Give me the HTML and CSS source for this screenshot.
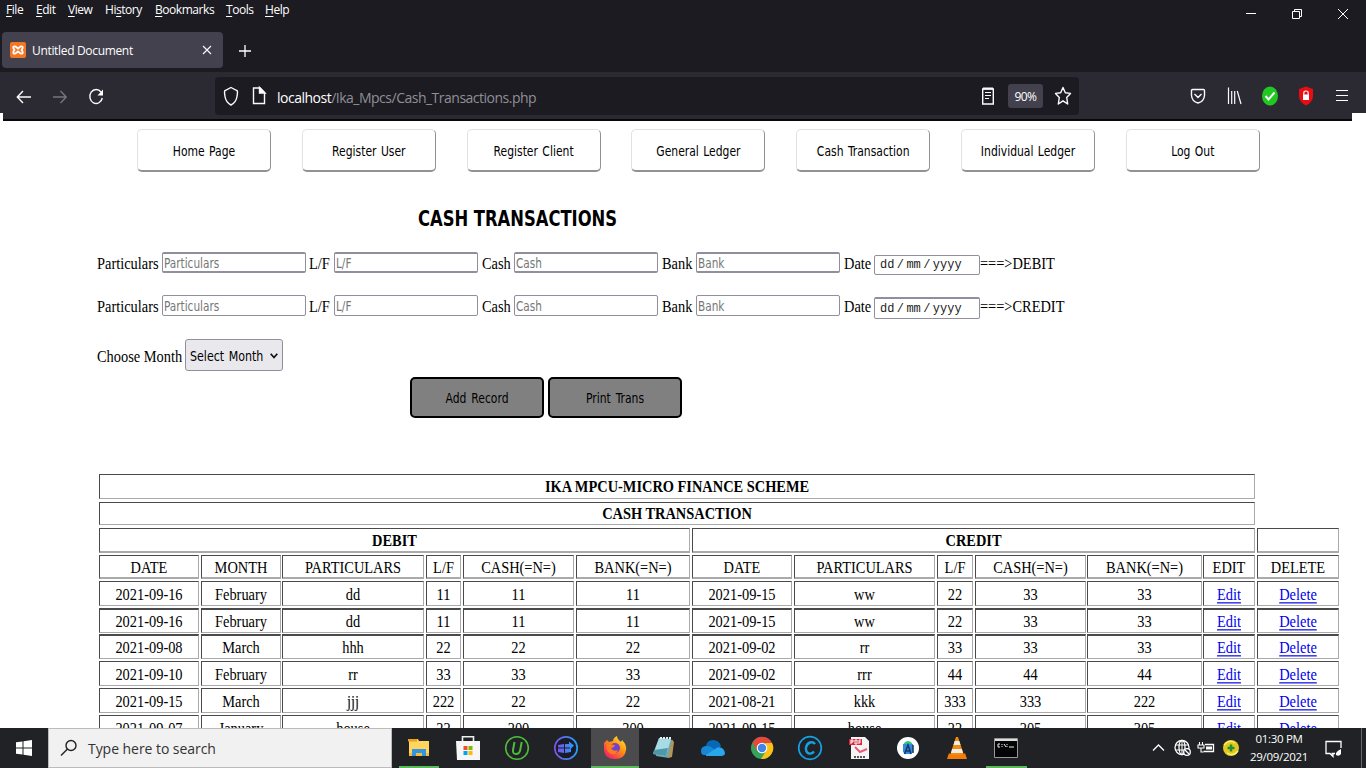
FILE: index.html
```html
<!DOCTYPE html>
<html lang="en">
<head>
<meta charset="utf-8">
<title>Untitled Document</title>
<link rel="stylesheet" href="styles.css">
</head>
<body>
<header class="chrome">
  <div class="titlebar">
    <nav class="menus"><span><u>F</u>ile</span><span><u>E</u>dit</span><span><u>V</u>iew</span><span>Hi<u>s</u>tory</span><span><u>B</u>ookmarks</span><span><u>T</u>ools</span><span><u>H</u>elp</span></nav>
    <svg class="winctl" width="110" height="28" fill="none" stroke="#fff" stroke-width="1"><path d="M6 13.500h10M52.500 11.500h7v7h-7zM54.500 11.500v-2h7v7h-2M98 9l10 10M108 9l-10 10"/></svg>
  </div>
  <div class="tabs">
    <div class="tab">
      <svg width="16" height="16"><rect width="16" height="16" rx="2" fill="#f37623"/><path d="M5.500 4.500L8 6.500l2.500-2q3-.5 2 2L11.500 8l1 1.500q1 2.500-2 2L8 9.500l-2.500 2q-3 .5-2-2L4.500 8l-1-1.500q-1-2.500 2-2z" fill="none" stroke="#fff" stroke-width="1.800"/></svg>
      <span class="tabname">Untitled Document</span>
      <svg width="10" height="10" stroke="#fbfbfe" stroke-width="1.100"><path d="M1 1l8 8M9 1l-8 8"/></svg>
    </div>
    <svg class="plus" width="12" height="12" stroke="#fff" stroke-width="1.300"><path d="M0 6h12M6 0v12"/></svg>
  </div>
  <div class="toolbar">
    <svg class="navicons" width="92" height="20" fill="none" stroke="#fbfbfe" stroke-width="1.400"><path d="M15 10H1.500M7 4L1.300 10 7 16"/><path d="M37 10h13.500M44.500 4l5.700 6-5.700 6" stroke="#77767f"/><path d="M85 5A6.300 7 0 1 0 86.300 11"/><path d="M87 2.500v6h-5.500z" fill="#fff" stroke="none"/></svg>
    <div class="urlbar">
      <svg width="46" height="22" fill="none" stroke="#fbfbfe" stroke-width="1.400"><path d="M9 2.500l5.800 3c1 0 .7 3 .2 6-.6 4-3 7-6 8.500-3-1.500-5.400-4.500-6-8.500-.5-3-.8-6 .2-6z"/><path d="M32 3h6l4.500 4.500v11H31.500V3z"/><path d="M37.500 2.500v5.500h5.500z" fill="#fff"/></svg>
      <span class="url"><b>localhost</b>/Ika_Mpcs/Cash_Transactions.php</span>
      <svg width="12" height="18" fill="none" stroke="#fbfbfe"><path d="M.700 2h10.600v15H.700z" stroke-width="1.400"/><path d="M1 1.500h10" stroke-width="2"/><path d="M3 5.500h6M3 8.500h6M3 11.500h4" stroke-width="1.200"/></svg>
      <span class="zoom"><span>90%</span></span>
      <svg width="18" height="20" fill="none" stroke="#fbfbfe" stroke-width="1.400" stroke-linejoin="round"><path d="M9 1.500l2.300 5.300 5.200.6-3.800 4.100 1 6.500L9 14.800 4.300 18l1-6.500L1.500 7.400l5.200-.6z"/></svg>
    </div>
    <svg class="exts" width="162" height="22" fill="none" stroke="#fbfbfe" stroke-width="1.400"><path d="M2.500 4.500h11q1 0 1 1v5q-.5 6-6.500 7.500-6-1.500-6.500-7.500v-5q0-1 1-1zM4.500 9L8 12.500l3.500-3.500"/><path d="M38.500 2.500v16.500M41.700 6v13M44.700 6v13M47.300 6l3.700 13" stroke-width="1.200"/><ellipse cx="80" cy="11" rx="8" ry="9.500" fill="#21c821" stroke="none"/><path d="M75.500 11l3 3.500 6-7" stroke-width="2"/><path d="M116 1.500l7 2.500v7q0 6-7 9.500-7-3.500-7-9.500V4z" fill="#e80d12" stroke="none"/><path d="M113.800 10V8q0-2 2.200-2T118.200 8v2" stroke-width="1.200"/><path d="M113 9.500h6v5.500h-6z" fill="#fff" stroke="none"/><path d="M146 5.500h12M146 10.500h12M146 15.500h12" stroke-width="1.200"/></svg>
  </div>
</header>

<main class="page">
  <nav class="links"><a><span>Home Page</span></a><a><span>Register User</span></a><a><span>Register Client</span></a><a><span>General Ledger</span></a><a><span>Cash Transaction</span></a><a><span>Individual Ledger</span></a><a><span>Log Out</span></a></nav>
  <h1><span>CASH TRANSACTIONS</span></h1>
  <div class="entry debit"><label>Particulars</label><div class="box"><span>Particulars</span></div><label>L/F</label><div class="box"><span>L/F</span></div><label>Cash</label><div class="box"><span>Cash</span></div><label>Bank</label><div class="box"><span>Bank</span></div><label>Date</label><div class="date"><span>dd</span><em>/</em><span>mm</span><em>/</em><span>yyyy</span></div><label>===&gt;DEBIT</label></div>
  <div class="entry credit"><label>Particulars</label><div class="box"><span>Particulars</span></div><label>L/F</label><div class="box"><span>L/F</span></div><label>Cash</label><div class="box"><span>Cash</span></div><label>Bank</label><div class="box"><span>Bank</span></div><label>Date</label><div class="date"><span>dd</span><em>/</em><span>mm</span><em>/</em><span>yyyy</span></div><label>===&gt;CREDIT</label></div>
  <div class="month"><label>Choose Month</label><div class="select"><span>Select Month</span><svg width="8" height="6" fill="none" stroke="#111" stroke-width="1.700"><path d="M.7.700L4 4.500 7.300.700"/></svg></div></div>
  <div class="actions"><div><span>Add Record</span></div><div><span>Print Trans</span></div></div>
  <div class="sheet">
    <div class="row r1"><div class="wide"><b>IKA MPCU-MICRO FINANCE SCHEME</b></div></div>
    <div class="row r2"><div class="wide"><b>CASH TRANSACTION</b></div></div>
    <div class="row r3"><div class="left"><b>DEBIT</b></div><div class="right"><b>CREDIT</b></div><div></div></div>
    <div class="row cells r4"><div><span>DATE</span></div><div><span>MONTH</span></div><div><span>PARTICULARS</span></div><div><span>L/F</span></div><div><span>CASH(=N=)</span></div><div><span>BANK(=N=)</span></div><div><span>DATE</span></div><div><span>PARTICULARS</span></div><div><span>L/F</span></div><div><span>CASH(=N=)</span></div><div><span>BANK(=N=)</span></div><div><span>EDIT</span></div><div><span>DELETE</span></div></div>
    <div class="row cells r5"><div><span>2021-09-16</span></div><div><span>February</span></div><div><span>dd</span></div><div><span>11</span></div><div><span>11</span></div><div><span>11</span></div><div><span>2021-09-15</span></div><div><span>ww</span></div><div><span>22</span></div><div><span>33</span></div><div><span>33</span></div><div><a>Edit</a></div><div><a>Delete</a></div></div>
    <div class="row cells r6"><div><span>2021-09-16</span></div><div><span>February</span></div><div><span>dd</span></div><div><span>11</span></div><div><span>11</span></div><div><span>11</span></div><div><span>2021-09-15</span></div><div><span>ww</span></div><div><span>22</span></div><div><span>33</span></div><div><span>33</span></div><div><a>Edit</a></div><div><a>Delete</a></div></div>
    <div class="row cells r7"><div><span>2021-09-08</span></div><div><span>March</span></div><div><span>hhh</span></div><div><span>22</span></div><div><span>22</span></div><div><span>22</span></div><div><span>2021-09-02</span></div><div><span>rr</span></div><div><span>33</span></div><div><span>33</span></div><div><span>33</span></div><div><a>Edit</a></div><div><a>Delete</a></div></div>
    <div class="row cells r8"><div><span>2021-09-10</span></div><div><span>February</span></div><div><span>rr</span></div><div><span>33</span></div><div><span>33</span></div><div><span>33</span></div><div><span>2021-09-02</span></div><div><span>rrr</span></div><div><span>44</span></div><div><span>44</span></div><div><span>44</span></div><div><a>Edit</a></div><div><a>Delete</a></div></div>
    <div class="row cells r9"><div><span>2021-09-15</span></div><div><span>March</span></div><div><span>jjj</span></div><div><span>222</span></div><div><span>22</span></div><div><span>22</span></div><div><span>2021-08-21</span></div><div><span>kkk</span></div><div><span>333</span></div><div><span>333</span></div><div><span>222</span></div><div><a>Edit</a></div><div><a>Delete</a></div></div>
    <div class="row cells r10"><div><span>2021-09-07</span></div><div><span>January</span></div><div><span>house</span></div><div><span>22</span></div><div><span>200</span></div><div><span>300</span></div><div><span>2021-09-15</span></div><div><span>house</span></div><div><span>22</span></div><div><span>205</span></div><div><span>305</span></div><div><a>Edit</a></div><div><a>Delete</a></div></div>
  </div>
</main>

<footer class="taskbar">
  <div class="start"><svg width="16" height="16" fill="#fff"><path d="M0 2.300L6.500 1.400V7.500H0zM7.500 1.200L16 0v7.500H7.500zM0 8.500h6.500v6.100L0 13.700zM7.500 8.500H16V16L7.500 14.800z"/></svg></div>
  <div class="search"><svg width="18" height="18" fill="none" stroke="#222" stroke-width="1.400"><circle cx="11" cy="6.500" r="5"/><path d="M7.500 10L1 16.500"/></svg><span>Type here to search</span></div>
  <div class="apps">
    <div class="open"><svg width="24" height="24"><path d="M2 3h9l1 2h10v15H2z" fill="#ffd45f"/><path d="M1 3h9v2.500H1z" fill="#e8a317"/><path d="M2 17h20v3H2z" fill="#f2bd43"/><path d="M5 20v-7h14v7h-4v-3H9v3z" fill="#3594dc"/></svg></div>
    <div><svg width="24" height="26"><path d="M6.500 8V1.700h11V8" fill="none" stroke="#eee" stroke-width="1.600"/><path d="M0 6h24v19H1z" fill="#f6f6f6"/><path d="M7.500 11h4v4h-4z" fill="#f25022"/><path d="M12.500 11h4v4h-4z" fill="#7fba00"/><path d="M7.500 16h4v4h-4z" fill="#00a4ef"/><path d="M12.500 16h4v4h-4z" fill="#ffb900"/></svg></div>
    <div><svg width="26" height="26" fill="none" stroke="#4dbb3b"><circle cx="13" cy="13" r="11.300" stroke-width="1.600"/><path d="M10.500 7l-1.500 8q-.4 4 3 4t4.200-4L17.700 7" stroke-width="2"/></svg></div>
    <div><svg width="26" height="26"><defs><linearGradient id="ring" x2="1"><stop stop-color="#7955e8"/><stop offset="1" stop-color="#269ff5"/></linearGradient></defs><circle cx="13" cy="13" r="11.200" fill="#191b29" stroke="url(#ring)" stroke-width="1.700"/><path d="M5 10l6-1v3.500H5zM12 9h4V6.500l5 4-4 4v-2h-5zM5 13.500h6V18l-6-1zM12 13.500h6V17l-6 1z" fill="url(#ring)"/></svg></div>
    <div class="open active"><svg width="26" height="26"><defs><linearGradient id="fire" x1="1" y1="0" x2=".2" y2="1"><stop stop-color="#fff44f"/><stop offset=".45" stop-color="#ff980e"/><stop offset="1" stop-color="#f5196b"/></linearGradient></defs><path d="M2 8L5 5l2 2 4-1q0-3 4-5 0 3 4 6l1-2q5 5 4 10-1 9-11 9Q2 24 2 14z" fill="url(#fire)"/><circle cx="13" cy="13" r="5" fill="#7043ca"/><path d="M5 9l8 1q-1 3-4 3 2 4 7 2-2 5-7 4-6-3-4-10z" fill="#ff7b22"/></svg></div>
    <div><svg width="24" height="24"><path d="M7 2l14 2-4 18-13-2z" fill="#6da8b4"/><path d="M7 2l12 1-5 17-13-2z" fill="#a8dce5"/><path d="M2 14l14-2-2 8-13-2z" fill="#4f98a8"/><path d="M20 4l2 2-2 15-4 1z" fill="#b99452"/><path d="M8 2h12" stroke="#eee" stroke-width="2" stroke-dasharray="2 1"/></svg></div>
    <div><svg width="26" height="18"><path d="M6 7Q7 1 13 1t8 6l-6 7H4z" fill="#0868b8"/><path d="M1 12q0-5 6-5 4 0 8 4l-4 5H4q-3 0-3-4z" fill="#1787d6"/><path d="M6 16l9-6q3-3 7-1 3 2 3 5 0 3-4 3H6z" fill="#28a8ea"/></svg></div>
    <div><svg width="24" height="24"><circle cx="12" cy="12" r="11" fill="#36a35a"/><path d="M2.500 6.500A11 11 0 0 1 22 7H12l-5 8z" fill="#e34a3c"/><path d="M22 7A11 11 0 0 1 11 23l5-8q2-4-1-8z" fill="#fbc116"/><circle cx="12" cy="12" r="5.300" fill="#fff"/><circle cx="12" cy="12" r="4.200" fill="#4285e8"/></svg></div>
    <div><svg width="26" height="26" fill="none" stroke="#13a0e5"><circle cx="13" cy="13" r="11.300" stroke-width="1.700"/><path d="M18 9q-2-2.500-5-1.500-3 1-4 5-.5 5 3 6 3 .5 5-2" stroke-width="2.400"/></svg></div>
    <div><svg width="22" height="24"><path d="M3 1h14l4 4v18H3z" fill="#f4f4f4"/><path d="M1 3h13v6H1z" fill="#dc263c"/><path d="M3 8V4h2v2H3M7 4v4h2V4zM11 8V4h2M11 6h2" stroke="#fff" fill="none"/><path d="M7 11l5 5 7-3" stroke="#ea5b78" stroke-width="2" fill="none"/><path d="M6 21h11" stroke="#555" stroke-width="2" stroke-dasharray="2 1"/></svg></div>
    <div><svg width="24" height="24"><circle cx="12" cy="12" r="11" fill="#fff"/><path d="M8 7q4-4 8 0v2H8z" fill="#33c87e"/><path d="M7 8h10v8l-2 2H9l-2-2z" fill="#3688df"/><path d="M8.500 18L12 9l3 9M10 15h4M17 9v8" stroke="#123a66" stroke-width="1.500" fill="none"/></svg></div>
    <div><svg width="22" height="24"><path d="M10 1h2l6 18H4z" fill="#f58a0b"/><path d="M8.700 5h4.600l1.200 4H7.500zM6.200 13h9.600l1.200 4H5z" fill="#eee"/><path d="M3 17l-2 6h20l-2-6-2 2H5z" fill="#f27c08"/></svg></div>
    <div class="open"><svg width="24" height="20"><path d="M.500.500h23v19H.500z" fill="#050505" stroke="#999"/><path d="M1 1h22v2H1z" fill="#ddd"/><path d="M6 6H4v3h2M8 6v1M8 8v1M10 6l2 3M13 6v1M13 8v1M15 9h5" stroke="#eee" fill="none"/></svg></div>
  </div>
  <div class="tray">
    <svg width="90" height="24" fill="none" stroke="#fff" stroke-width="1.300"><path d="M1 14.500l5.500-5.500 5.500 5.500"/><circle cx="30" cy="11.500" r="7"/><ellipse cx="30" cy="11.500" rx="3" ry="7"/><path d="M23 9h14M23 14h9M30 4v15" stroke-width="1"/><circle cx="35" cy="16" r="3.300" fill="#222225"/><path d="M33 14l4 4"/><path d="M47.500 6v3M50.500 6v3M46 9h6v3h-6zM49 12v4h2.500" stroke-width="1.100"/><path d="M53 8.500h8.500v7H51.500"/><path d="M54 10.500h6v3h-6z" fill="#fff" stroke="none"/><circle cx="79" cy="12" r="8" fill="#e1c923" stroke="none"/><path d="M72 9q5-6 11-2M86 15q-5 6-11 2" stroke="#fff173"/><path d="M79 8.500v7M75.500 12h7" stroke="#248b38" stroke-width="2.500"/></svg>
    <div class="clock"><span>01:30 PM</span><span>29/09/2021</span></div>
    <svg class="note" width="18" height="18" fill="none" stroke="#fff" stroke-width="1.300"><path d="M10 13.500H6.500M16 8V1.500H1v12h4l3 3v-3"/><path d="M16 9q-6 3-5 6 3 2 5-1z" fill="#fff" stroke="none"/></svg>
  </div>
</footer>
</body>
</html>
```
FILE: styles.css
```css
* { box-sizing: border-box; }
body { margin: 0; width: 1366px; height: 768px; overflow: hidden; display: flex; flex-direction: column; background: #fff; color: #000; }
svg { display: block; flex: none; }
span, b, label { white-space: nowrap; }

.chrome { height: 121px; flex: none; background: #1c1b22; color: #fff; font-family: "Open Sans", sans-serif; font-size: 12px; }
.titlebar { height: 32px; display: flex; justify-content: space-between; padding: 0 16px 0 6px; }
.menus { display: grid; grid-template-columns: 30px 32px 37px 50px 71px 39px 30px; height: 20px; line-height: 20px; letter-spacing: -.45px; }
.menus u { text-underline-offset: 2px; }
.tabs { height: 40px; display: flex; align-items: flex-start; padding-left: 2px; }
.tab { width: 221px; height: 36px; border-radius: 4px; background: #42414d; display: flex; align-items: center; padding: 0 11px 0 8px; gap: 6px; }
.tabname { flex: 1; letter-spacing: -.33px; }
.plus { margin: 13px 0 0 16px; }
.toolbar { height: 49px; background: #2b2a33; border-bottom: 2px solid #08080b; display: flex; padding: 5px 0 0 16px; position: relative; }
.toolbar::before, .toolbar::after { content: ""; position: absolute; bottom: -2px; left: 0; width: 3px; height: 8px; background: #fff; }
.toolbar::after { left: auto; right: 0; width: 14px; }
.navicons { margin-top: 10px; }
.urlbar { margin-left: 107px; width: 864px; height: 38px; border-radius: 4px; background: #1c1b22; display: flex; align-items: center; padding: 0 7px; }
.url { flex: 1; margin-left: 9px; padding-top: 3px; font-size: 14px; letter-spacing: -.5px; color: #8f8f98; }
.url b { color: #fff; font-weight: 400; }
.zoom { width: 35px; height: 24px; margin: 0 11px 0 14px; border-radius: 3px; background: #42414d; display: flex; align-items: center; justify-content: center; letter-spacing: -.6px; }
.exts { margin: 8px 0 0 111px; }

.page { height: 607px; flex: none; overflow: hidden; font-family: "Liberation Serif", serif; font-size: 14.4px; }
.links, h1, .box, .select, .actions { font-family: "DejaVu Sans Condensed", "DejaVu Sans", sans-serif; font-stretch: condensed; }
.links span, .box span, .select span, .actions span { display: inline-block; transform: scaleY(1.17); }
.links { display: grid; grid-template-columns: repeat(7, 134px); column-gap: 30.800px; padding: 8px 0 0 137px; font-size: 12px; word-spacing: 1px; }
.links a { height: 43px; border: 1px solid; border-width: 1px 1.500px 2px 1px; border-color: #e2e2e2 #929292 #929292 #e2e2e2; border-radius: 5px; display: flex; align-items: center; justify-content: center; padding-top: 2px; }
h1 { height: 24px; margin: 34px 0 0 418px; font-size: 18.200px; line-height: 26px; }
h1 span { display: inline-block; transform: scaleY(1.12); }
.entry { display: grid; grid-template-columns: 65px 144px 3px 25px 144px 4px 32px 144px 4px 34px 144px 4px 30px 106px auto; padding-left: 97px; height: 23px; }
.entry > :nth-child(3) { grid-column: 4; }
.entry > :nth-child(5) { grid-column: 7; }
.entry > :nth-child(7) { grid-column: 10; }
.entry > :nth-child(9) { grid-column: 13; }
.entry label, .month label { display: block; line-height: 22px; transform: scaleY(1.18); }
.debit { margin-top: 22px; }
.credit { margin-top: 20px; }
.box { height: 21px; border: 1px solid #8f8f9d; border-radius: 2px; display: flex; align-items: center; color: #777; padding: 1px 0 0 1px; font-size: 11.700px; }
.debit .box { border-top-width: 2px; border-bottom-width: 2px; }
.date { height: 20px; margin-top: 3px; border: 1px solid #8f8f9d; border-radius: 2px; font-family: "Liberation Mono", monospace; font-size: 12px; color: #222; display: flex; align-items: center; padding-left: 5px; }
.date em { width: 12px; text-align: center; font-style: normal; }
.date span { transform: scaleY(1.05); }
.credit .date { height: 22px; margin-top: 2px; border-top-width: 2px; }
.month { display: flex; align-items: center; height: 32px; margin: 21px 0 0 97px; gap: 3px; }
.month label { width: 85px; padding-top: 2px; }
.select { width: 98px; height: 32px; border: 1px solid #8f8f9d; border-radius: 3px; background: #e9e9ed; display: flex; align-items: center; justify-content: space-between; padding: 3px 4px 1px; font-size: 12.300px; word-spacing: 1px; }
.actions { display: flex; gap: 4px; margin: 6px 0 56px 410px; font-size: 12px; word-spacing: 1.500px; }
.actions div { width: 134px; height: 41px; border: 2px solid #000; border-radius: 5px; background: gray; display: flex; align-items: center; justify-content: center; }

.sheet { padding-left: 99px; }
.row { display: grid; grid-template-columns: 102px 81px 144px 37px 113px 116px 102px 143px 38px 112px 116px 54px 82px; }
.row > div { border: 1px solid; border-color: #4a4a4a #aaa #aaa #4a4a4a; margin-right: 2px; display: flex; align-items: center; justify-content: center; overflow: hidden; }
.row > div:last-child:not(.wide) { margin-right: 0; }
.cells > :nth-child(2), .cells > :nth-child(10), .cells > :nth-child(11) { margin-right: 1px; }
.row .wide { grid-column: 1 / 13; padding-bottom: 2px; }
.row .left { grid-column: 1 / 7; }
.row .right { grid-column: 7 / 13; }
.row span, .row b, .row a { display: block; line-height: 18px; transform: scaleY(1.18); }
.row a { color: #0000ee; text-decoration: underline; text-underline-offset: 1.500px; text-decoration-thickness: 1px; }
.r1 { height: 25px; margin-bottom: 3px; }
.r2 { height: 23px; margin-bottom: 3px; }
.r3 { height: 25px; margin-bottom: 2px; }
.r4 { height: 24px; margin-bottom: 2px; }
.r3 > div, .r4 > div { border-bottom-width: 2px; }
.r5 { height: 25px; margin-bottom: 2px; }
.r6 { height: 25px; margin-bottom: 1px; }
.r7 { height: 25px; margin-bottom: 2px; }
.r6 > div, .r7 > div { border-top-width: 2px; }
.r8 { height: 25px; margin-bottom: 2px; }
.r9 { height: 25px; margin-bottom: 2px; }
.r10 { height: 25px; }

.taskbar { height: 40px; flex: none; background: #202225; display: flex; color: #fff; font-family: "Open Sans", sans-serif; }
.start { width: 48px; display: flex; align-items: center; justify-content: center; }
.search { width: 344px; background: #f1f1f1; border: 1px solid #bbb; color: #333; display: flex; align-items: center; gap: 10px; padding-left: 11px; font-size: 14px; letter-spacing: -.05px; }
.apps { display: grid; grid-template-columns: repeat(13, 48.950px); margin-left: 2.500px; }
.apps > div { display: flex; align-items: center; justify-content: center; }
.apps .open { box-shadow: inset 0 -2px #5bb85b; margin: 0 4px; }
.apps .active { background: #4b4b4d; margin: 0 .500px; }
.tray { flex: 1; display: flex; align-items: center; justify-content: flex-end; margin-right: 4px; border-right: 1px solid #666; }
.clock { width: 72px; display: flex; flex-direction: column; align-items: center; font-size: 11.500px; line-height: 18px; letter-spacing: -.3px; margin-left: 1px; }
.note { margin: 2px 18px 0 10px; }
```
